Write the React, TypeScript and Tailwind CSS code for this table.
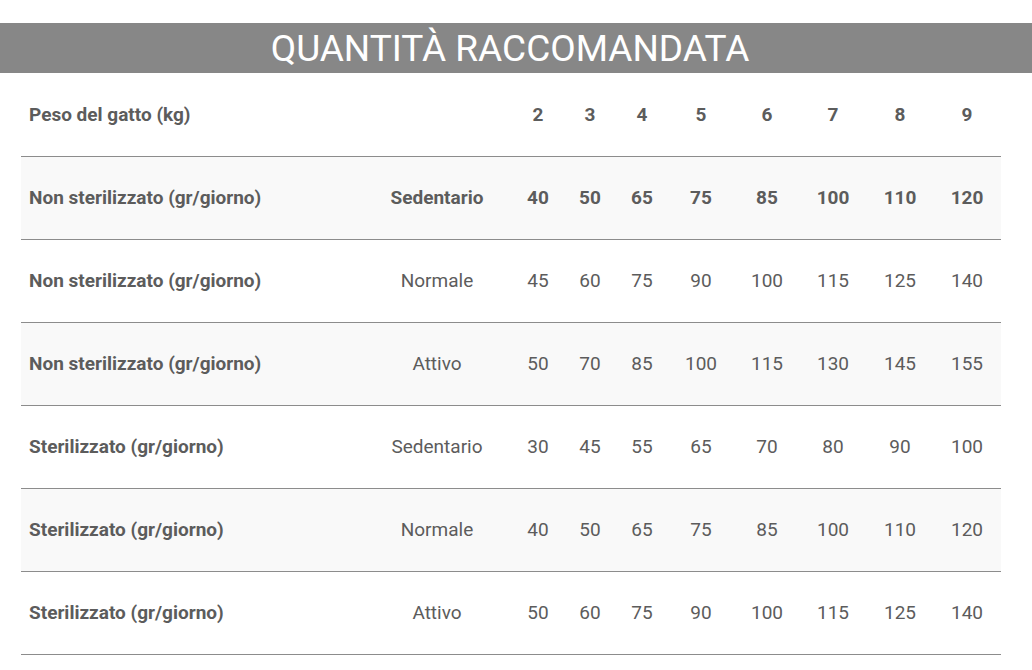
import React from "react";

const cols = "grid grid-cols-[340px_152px_50px_54px_50px_68px_64px_68px_66px_68px]";

const rows: { label: string; act: string; vals: number[]; bold?: boolean }[] = [
  { label: "Non sterilizzato (gr/giorno)", act: "Sedentario", vals: [40, 50, 65, 75, 85, 100, 110, 120], bold: true },
  { label: "Non sterilizzato (gr/giorno)", act: "Normale", vals: [45, 60, 75, 90, 100, 115, 125, 140] },
  { label: "Non sterilizzato (gr/giorno)", act: "Attivo", vals: [50, 70, 85, 100, 115, 130, 145, 155] },
  { label: "Sterilizzato (gr/giorno)", act: "Sedentario", vals: [30, 45, 55, 65, 70, 80, 90, 100] },
  { label: "Sterilizzato (gr/giorno)", act: "Normale", vals: [40, 50, 65, 75, 85, 100, 110, 120] },
  { label: "Sterilizzato (gr/giorno)", act: "Attivo", vals: [50, 60, 75, 90, 100, 115, 125, 140] },
];

export default function App() {
  return (
    <div className="w-[1032px] h-[670px] bg-white overflow-hidden pt-[23px]" style={{ fontFamily: "Roboto, sans-serif" }}>
      <div className="h-[50px] bg-[#878787] flex items-center justify-center">
        <h1 className="text-white text-[37px] leading-none font-normal mr-[12px]">QUANTITÀ RACCOMANDATA</h1>
      </div>
      <div className="ml-[21px] w-[980px] text-[#5c5c5c] text-[19px]">
        <div className={`${cols} h-[84px] pt-[2px] items-center font-bold border-b border-[#8c8c8c]`}>
          <div className="pl-[8px]">Peso del gatto (kg)</div>
          <div></div>
          {[2, 3, 4, 5, 6, 7, 8, 9].map((n) => (
            <div key={n} className="text-center">{n}</div>
          ))}
        </div>
        {rows.map((r, i) => (
          <div
            key={i}
            className={`${cols} h-[83px] items-center border-b border-[#8c8c8c] ${i % 2 === 0 ? "bg-[#f9f9f9]" : "bg-white"}`}
          >
            <div className="pl-[8px] font-bold">{r.label}</div>
            <div className={`text-center ${r.bold ? "font-bold" : ""}`}>{r.act}</div>
            {r.vals.map((v, j) => (
              <div key={j} className={`text-center ${r.bold ? "font-bold" : ""}`}>{v}</div>
            ))}
          </div>
        ))}
      </div>
    </div>
  );
}
